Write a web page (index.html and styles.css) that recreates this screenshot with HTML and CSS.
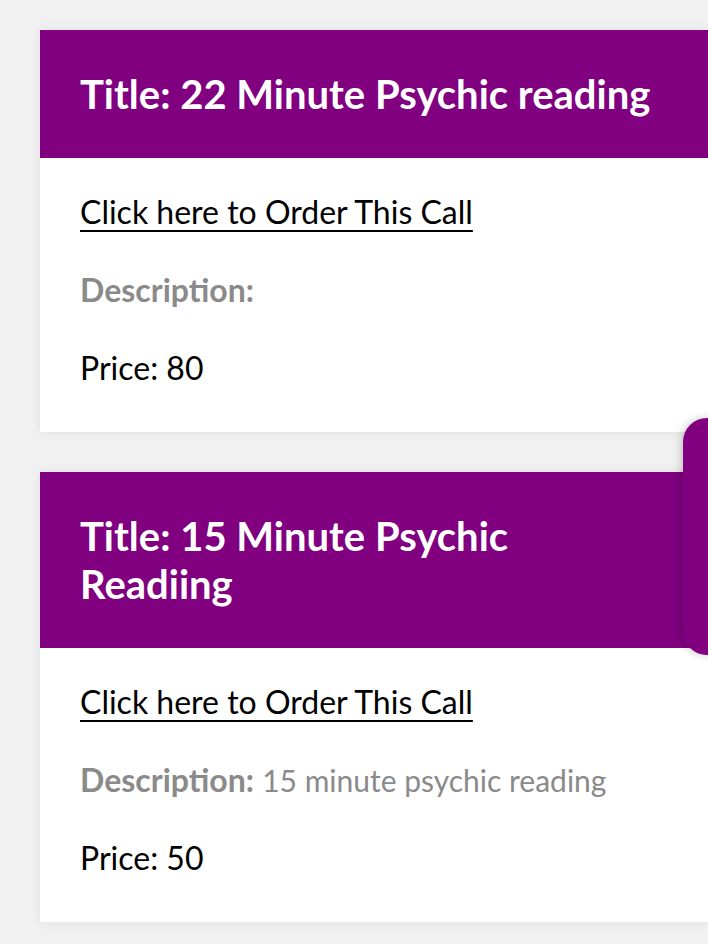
FILE: index.html
```html
<!DOCTYPE html>
<html lang="en">
<head>
    <meta charset="UTF-8">
    <meta name="viewport" content="width=device-width, initial-scale=1.0">
    <title>Calls</title>
    <link rel="stylesheet" href="styles.css">
</head>
<body>

    <div class="call-list">
        <div class="call-card">
            <div class="call-head">
                <h2>Title: 22 Minute Psychic reading</h2>
            </div>
            <div class="call-body">
                <p><a href="#">Click here to Order This Call</a></p>
                <p class="desc"><strong>Description:</strong> <span class="desc-text"></span></p>
                <p>Price: 80</p>
            </div>
        </div>

        <div class="call-card">
            <div class="call-head">
                <h2>Title: 15 Minute Psychic Readiing</h2>
            </div>
            <div class="call-body">
                <p><a href="#">Click here to Order This Call</a></p>
                <p class="desc"><strong>Description:</strong> <span class="desc-text">15 minute psychic reading</span></p>
                <p>Price: 50</p>
            </div>
        </div>
    </div>

    <div class="side-tab"></div>

</body>
</html>
```

FILE: styles.css
```css
html, body {
    overflow-x: hidden;
}
body {
    font-family: Lato, "Open Sans", Arial, sans-serif;
    margin: 0;
    background-color: #f1f1f1;
    color: #000;
}
.call-list {
    display: flex;
    flex-direction: column;
    gap: 40px;
    padding: 30px 0 40px 40px;
}
.call-card {
    width: 670px;
    background: #fff;
    box-shadow: 0 0 10px rgba(0, 0, 0, 0.08);
}
.call-head {
    background-color: #800080;
    padding: 40px;
}
.call-head h2 {
    margin: 0;
    color: #fff;
    font-size: 40px;
    font-weight: 700;
    line-height: 48px;
}
.call-body {
    padding: 30px 40px 40px;
    font-size: 32px;
    line-height: 48px;
}
.call-body p {
    margin: 0 0 30px;
}
.call-body p:last-child {
    margin-bottom: 0;
}
.call-body a {
    color: #000;
    text-decoration: underline;
    text-decoration-thickness: 2px;
    text-underline-offset: 6px;
}
.desc {
    color: #8a8a8a;
}
.desc-text {
    font-size: 30px;
}
.side-tab {
    position: fixed;
    top: 418px;
    right: -30px;
    width: 55px;
    height: 237px;
    background-color: #800080;
    border-radius: 24px;
    box-shadow: -2px 0 8px rgba(0, 0, 0, 0.2);
}
```
